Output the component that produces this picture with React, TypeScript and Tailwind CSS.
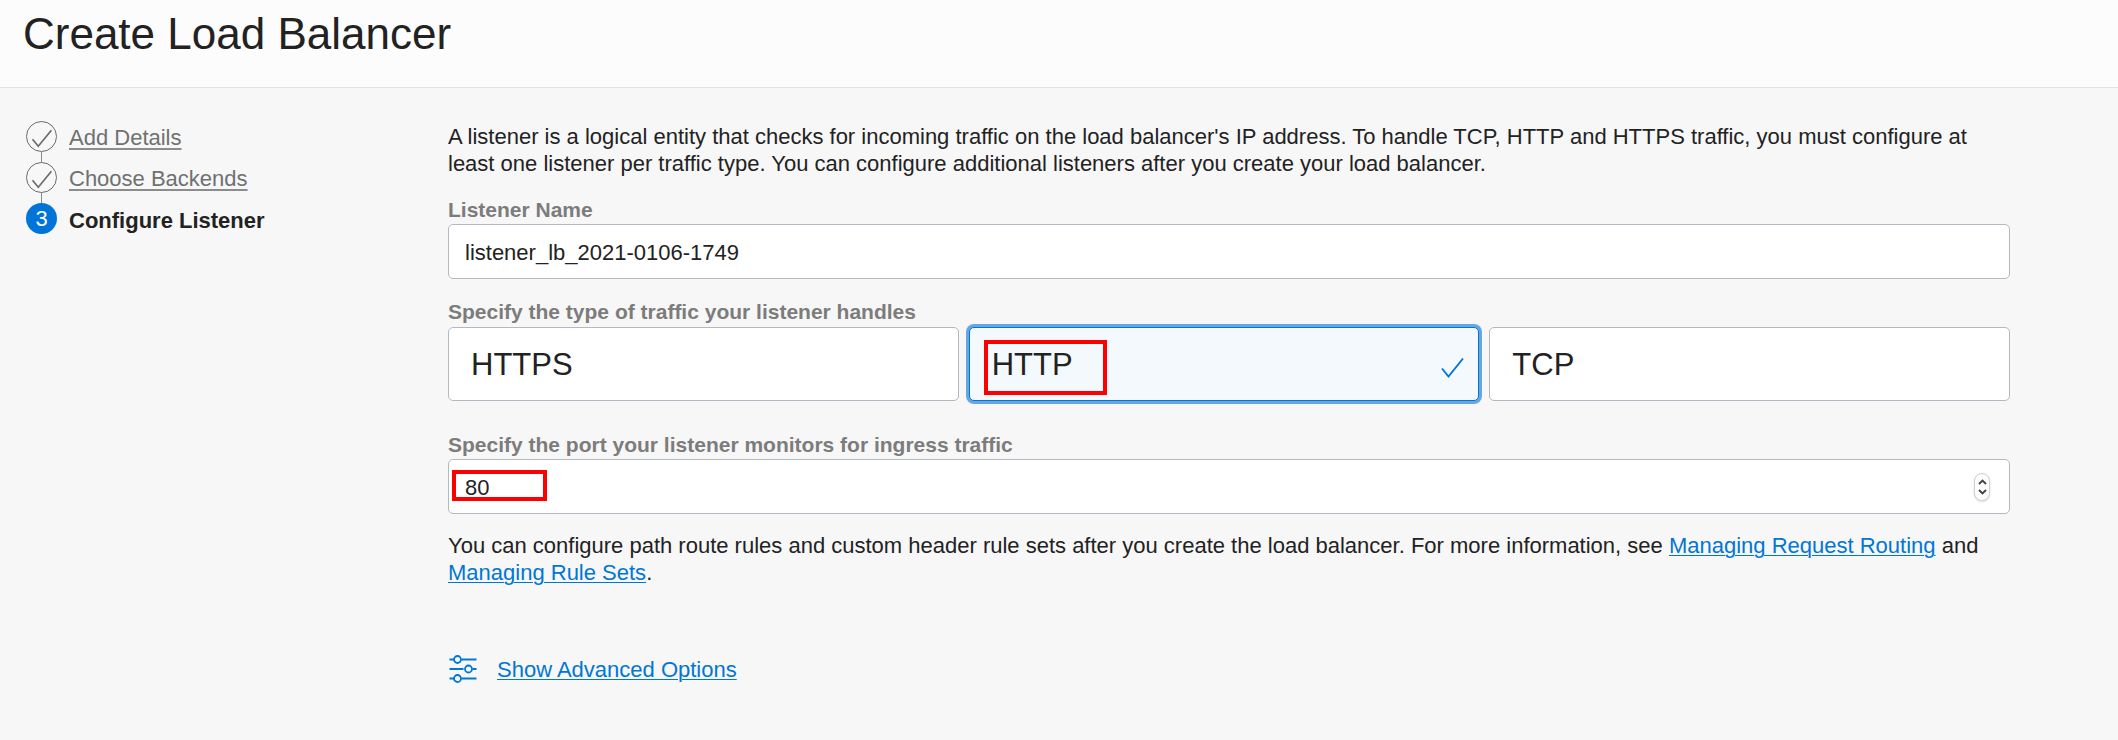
import { useState } from "react";

const steps = ["Add Details", "Choose Backends", "Configure Listener"];
const protocols = ["HTTPS", "HTTP", "TCP"];

function StepMarker({ index, current }: { index: number; current: boolean }) {
  if (current) {
    return (
      <span className="flex size-[31px] items-center justify-center rounded-full bg-[#0074d9] text-[22px] text-white">
        {index + 1}
      </span>
    );
  }
  return (
    <svg className="size-[31px]" viewBox="0 0 31 31" fill="none" aria-hidden="true">
      <circle cx="15.5" cy="15.5" r="15" stroke="#6b6b6b" />
      <path d="M6.5 18.2 12.3 25.2 25.4 9.3" stroke="#6b6b6b" strokeWidth="1.7" />
    </svg>
  );
}

function Stepper() {
  return (
    <nav className="w-[422px] shrink-0" aria-label="Progress">
      <ol>
        {steps.map((step, i) => {
          const current = i === steps.length - 1;
          return (
            <li key={step} className="flex gap-3">
              <div className="flex flex-col items-center">
                <StepMarker index={i} current={current} />
                {!current && <span className="h-[10px] w-px bg-[#8a8a8a]" />}
              </div>
              {current ? (
                <span className="pt-1 leading-[27px] font-bold" aria-current="step">
                  {step}
                </span>
              ) : (
                <a
                  href="#"
                  className="pt-[3px] leading-[27px] text-[#6f7170] underline decoration-[#8c8c8c] decoration-2 underline-offset-3"
                >
                  {step}
                </a>
              )}
            </li>
          );
        })}
      </ol>
    </nav>
  );
}

function TrafficType() {
  const [selected, setSelected] = useState("HTTP");
  return (
    <fieldset className="mt-[19px]">
      <legend className="text-[21px] leading-[27px] font-bold text-[#7c7c7c]">
        Specify the type of traffic your listener handles
      </legend>
      <div className="mt-[2px] grid grid-cols-3">
        {protocols.map((name) => {
          const on = name === selected;
          return (
            <div key={name} className="pr-[10px] last:pr-0">
              <label
                className={`relative flex h-[74px] cursor-pointer items-center justify-between rounded-[5px] border pt-[3px] pr-[14px] pl-[22px] text-[31px] ${
                  on ? "border-[#0076d6] bg-[#f4f9fd] ring-3 ring-[#67a5e5]" : "border-[#b3b8c1] bg-white"
                }`}
              >
                <input
                  type="radio"
                  name="traffic"
                  className="sr-only"
                  checked={on}
                  onChange={() => setSelected(name)}
                />
                {name}
                {on && (
                  <svg className="mt-1 h-[22px] w-[23px]" viewBox="0 0 23 22" fill="none" aria-hidden="true">
                    <path d="M1 11.5 7.5 19.5 22 1.500" stroke="#0076d6" strokeWidth="1.9" />
                  </svg>
                )}
                {name === "HTTP" && (
                  <span className="pointer-events-none absolute top-3 left-[14px] h-[55px] w-[123px] border-4 border-[#ff0000]" />
                )}
              </label>
            </div>
          );
        })}
      </div>
    </fieldset>
  );
}

export default function App() {
  const [name, setName] = useState("listener_lb_2021-0106-1749");
  const [port, setPort] = useState(80);

  return (
    <div className="flex min-h-screen flex-col bg-[#f7f7f7] font-['Helvetica_Neue','Liberation_Sans',Arial,sans-serif] text-[22px] text-[#222]">
      <header className="border-b border-[#e2e2e2] bg-[#fcfcfc] px-[23px] pt-2 pb-[27px]">
        <h1 className="text-[44px] leading-[52px]">Create Load Balancer</h1>
      </header>

      <main className="flex grow pt-[33px] pr-[108px] pb-10 pl-[26px]">
        <Stepper />
        <form className="min-w-0 grow" onSubmit={(e) => e.preventDefault()}>
          <p className="mt-[2px] leading-[27px]">
            A listener is a logical entity that checks for incoming traffic on the load balancer's IP address. To handle
            TCP, HTTP and HTTPS traffic, you must configure at least one listener per traffic type. You can configure
            additional listeners after you create your load balancer.
          </p>

          <label htmlFor="listener-name" className="mt-[19px] block text-[21px] leading-[27px] font-bold text-[#7c7c7c]">
            Listener Name
          </label>
          <input
            id="listener-name"
            type="text"
            value={name}
            onChange={(e) => setName(e.target.value)}
            className="mt-px block h-[55px] w-full rounded-[5px] border border-[#b3b8c1] bg-white px-4 pt-[2px]"
          />

          <TrafficType />

          <label htmlFor="listener-port" className="mt-[30px] block text-[21px] leading-[27px] font-bold text-[#7c7c7c]">
            Specify the port your listener monitors for ingress traffic
          </label>
          <div className="relative mt-px flex h-[55px] items-center rounded-[5px] border border-[#b3b8c1] bg-white pr-[19px]">
            <input
              id="listener-port"
              type="number"
              value={port}
              onChange={(e) => setPort(Number(e.target.value))}
              className="h-full min-w-0 grow [appearance:textfield] bg-transparent px-4 pt-[2px] outline-none"
            />
            <span className="flex h-7 w-4 flex-col overflow-hidden rounded-full border border-[#d0d0d0] bg-white py-[3px] shadow-sm">
              <button
                type="button"
                aria-label="Increase port"
                onClick={() => setPort(port + 1)}
                className="flex grow items-center justify-center"
              >
                <svg className="h-[6px] w-[9px]" viewBox="0 0 9 6" fill="none" aria-hidden="true">
                  <path d="M1 5 4.5 1.500 8 5" stroke="#444" strokeWidth="1.9" />
                </svg>
              </button>
              <button
                type="button"
                aria-label="Decrease port"
                onClick={() => setPort(port - 1)}
                className="flex grow items-center justify-center"
              >
                <svg className="h-[6px] w-[9px]" viewBox="0 0 9 6" fill="none" aria-hidden="true">
                  <path d="M1 1 4.5 4.500 8 1" stroke="#444" strokeWidth="1.9" />
                </svg>
              </button>
            </span>
            <span className="pointer-events-none absolute top-[10px] left-[3px] h-[31px] w-[95px] border-4 border-[#ff0000]" />
          </div>

          <p className="mt-[18px] leading-[27px]">
            You can configure path route rules and custom header rule sets after you create the load balancer. For more
            information, see{" "}
            <a href="#" className="text-[#0076d6] underline decoration-1 underline-offset-2">
              Managing Request Routing
            </a>{" "}
            and{" "}
            <a href="#" className="text-[#0076d6] underline decoration-1 underline-offset-2">
              Managing Rule Sets
            </a>
            .
          </p>

          <a href="#" className="mt-[69px] inline-flex items-center gap-5 leading-[27px] text-[#0076d6]">
            <svg className="h-7 w-[29px]" viewBox="0 0 29 28" fill="none" stroke="#0076d6" strokeWidth="1.8" aria-hidden="true">
              <path d="M1.500 4.500H6M13.500 4.500H28.500M1.500 14H15.500M24.500 14H28.500M1.500 23.500H6M13.500 23.500H28.500" />
              <circle cx="9.5" cy="4.500" r="3.500" />
              <circle cx="20.500" cy="14" r="3.500" />
              <circle cx="9.5" cy="23.500" r="3.500" />
            </svg>
            <span className="underline decoration-1 underline-offset-2">Show Advanced Options</span>
          </a>
        </form>
      </main>
    </div>
  );
}
